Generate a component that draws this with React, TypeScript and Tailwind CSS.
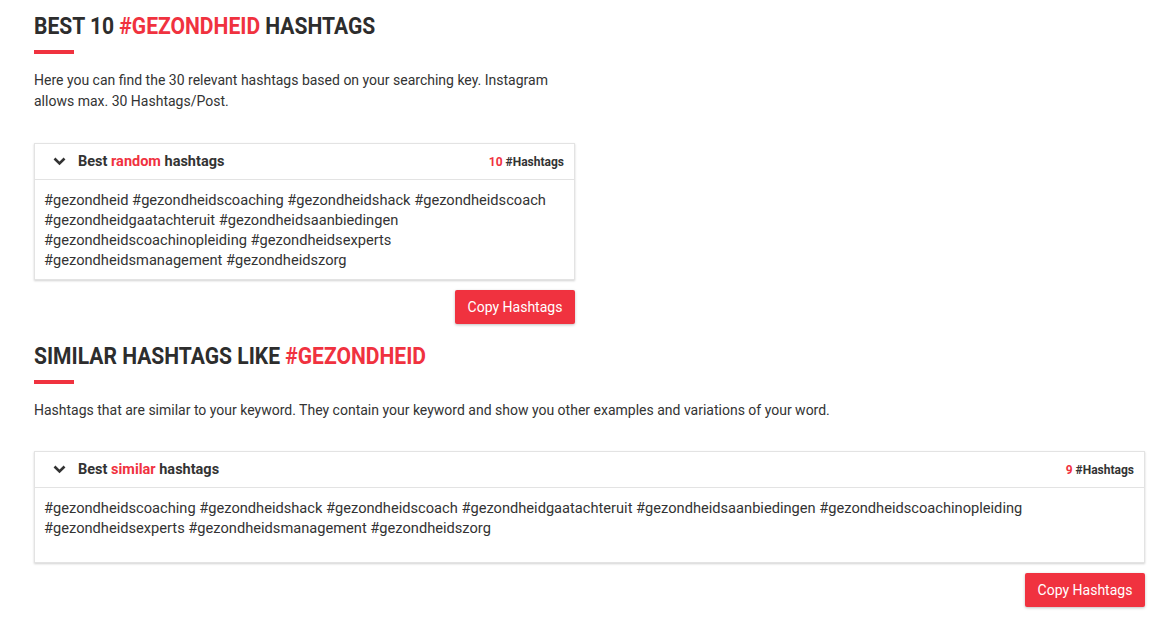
const RED = 'text-[#f0323f]';

const Chevron = () => (
  <svg width="13" height="9" viewBox="0 0 13 9" className="shrink-0">
    <path d="M1.5 1.5 L6.5 6.5 L11.5 1.5" fill="none" stroke="#333" strokeWidth="2.6" />
  </svg>
);

const Section = ({
  title,
  text,
  label,
  count,
  tags,
  width,
  cardGap,
  bodyClass,
}: {
  title: React.ReactNode;
  text: string;
  label: string;
  count: number;
  tags: string[];
  width: string;
  cardGap: string;
  bodyClass: string;
}) => (
  <section className={width}>
    <h2 className="text-[23px] leading-[30px] font-bold uppercase text-[#2d2d2d]">
      <span className="inline-block origin-left scale-x-[0.915] whitespace-nowrap">{title}</span>
    </h2>
    <div className="mt-[8px] h-[4px] w-[40px] bg-[#f0323f]" />
    <p className="mt-[16px] text-[14px] leading-[21px] text-[#333]">{text}</p>
    <div className={`${cardGap} border border-[#e3e3e3] bg-white shadow-[0_1px_2px_rgba(0,0,0,0.18)]`}>
      <div className="flex h-[36px] items-center justify-between border-b border-[#e3e3e3] pl-[18px] pr-[10px]">
        <div className="flex items-center gap-[12px] text-[14.5px] font-bold text-[#333]">
          <Chevron />
          <span>
            Best <span className={RED}>{label}</span> hashtags
          </span>
        </div>
        <div className="text-[12px] font-bold text-[#333]">
          <span className={RED}>{count}</span> #Hashtags
        </div>
      </div>
      <div className={`px-[9px] pt-[10px] text-[14.65px] leading-[20px] text-[#333] ${bodyClass}`}>
        {tags.map((t) => '#' + t).join(' ')}
      </div>
    </div>
    <div className="mt-[10px] flex justify-end">
      <button className="h-[34px] w-[120px] rounded-[2px] bg-[#f0323f] text-[14px] text-white shadow-[0_1px_3px_rgba(0,0,0,0.25)]">
        Copy Hashtags
      </button>
    </div>
  </section>
);

export default function App() {
  const all = [
    'gezondheid',
    'gezondheidscoaching',
    'gezondheidshack',
    'gezondheidscoach',
    'gezondheidgaatachteruit',
    'gezondheidsaanbiedingen',
    'gezondheidscoachinopleiding',
    'gezondheidsexperts',
    'gezondheidsmanagement',
    'gezondheidszorg',
  ];
  return (
    <div className="min-h-screen bg-white pl-[34px] pt-[12px]" style={{ fontFamily: 'Roboto, "Noto Sans", sans-serif' }}>
      <Section
        width="w-[541px]"
        title={
          <>
            Best 10 <span className={RED}>#gezondheid</span> Hashtags
          </>
        }
        text="Here you can find the 30 relevant hashtags based on your searching key. Instagram allows max. 30 Hashtags/Post."
        label="random"
        count={10}
        tags={all}
        cardGap="mt-[31px]"
        bodyClass="pb-[9px]"
      />
      <div className="h-[18px]" />
      <Section
        width="w-[1111px]"
        title={
          <>
            Similar Hashtags like <span className={RED}>#gezondheid</span>
          </>
        }
        text="Hashtags that are similar to your keyword. They contain your keyword and show you other examples and variations of your word."
        label="similar"
        count={9}
        tags={all.slice(1)}
        cardGap="mt-[30px]"
        bodyClass="pb-[24px]"
      />
    </div>
  );
}
